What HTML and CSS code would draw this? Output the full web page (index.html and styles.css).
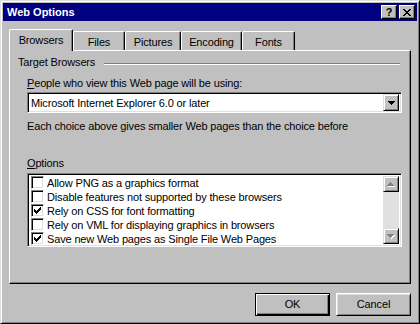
FILE: index.html
```html
<!DOCTYPE html>
<html>
<head>
<meta charset="utf-8">
<link rel="stylesheet" href="styles.css">
</head>
<body>
<div class="window">
  <div class="titlebar">
    <span class="title">Web Options</span>
    <div class="tbtns">
      <span class="tbtn help">?</span>
      <span class="tbtn close"><svg width="8" height="7" viewBox="0 0 8 7" shape-rendering="crispEdges"><path d="M0 0h2v1h1v1h2v-1h1v-1h2v1h-1v1h-1v1h-1v1h1v1h1v1h1v1h-2v-1h-1v-1h-2v1h-1v1h-2v-1h1v-1h1v-1h1v-1h-1v-1h-1v-1h-1z"/></svg></span>
    </div>
  </div>
  <div class="content">
    <div class="tabs">
      <div class="tab active w-browsers">Browsers</div>
      <div class="tab w-files">Files</div>
      <div class="tab w-pictures">Pictures</div>
      <div class="tab w-encoding">Encoding</div>
      <div class="tab w-fonts">Fonts</div>
    </div>
    <div class="panel">
      <div class="group-head">
        <span class="group-label">Target Browsers</span>
        <span class="etch"></span>
      </div>
      <div class="group-body">
        <div class="label people"><u>P</u>eople who view this Web page will be using:</div>
        <div class="combo">
          <span class="combo-text">Microsoft Internet Explorer 6.0 or later</span>
          <span class="combo-btn"><svg width="7" height="4" viewBox="0 0 7 4" shape-rendering="crispEdges"><path d="M0 0h7v1h-1v1h-1v1h-1v1h-1v-1h-1v-1h-1v-1h-1z"/></svg></span>
        </div>
        <div class="label hint">Each choice above gives smaller Web pages than the choice before</div>
        <div class="label options"><u>O</u>ptions</div>
        <div class="listbox">
          <div class="rows">
            <div class="row"><span class="cb"></span><span>Allow PNG as a graphics format</span></div>
            <div class="row"><span class="cb"></span><span>Disable features not supported by these browsers</span></div>
            <div class="row"><span class="cb"><svg width="7" height="7" viewBox="0 0 7 7" shape-rendering="crispEdges"><path d="M6 0h1v3h-1zM5 1h1v3h-1zM4 2h1v3h-1zM3 3h1v3h-1zM2 4h1v3h-1zM1 3h1v3h-1zM0 2h1v3h-1z"/></svg></span><span>Rely on CSS for font formatting</span></div>
            <div class="row"><span class="cb"></span><span>Rely on VML for displaying graphics in browsers</span></div>
            <div class="row"><span class="cb"><svg width="7" height="7" viewBox="0 0 7 7" shape-rendering="crispEdges"><path d="M6 0h1v3h-1zM5 1h1v3h-1zM4 2h1v3h-1zM3 3h1v3h-1zM2 4h1v3h-1zM1 3h1v3h-1zM0 2h1v3h-1z"/></svg></span><span>Save new Web pages as Single File Web Pages</span></div>
          </div>
          <div class="scrollbar">
            <span class="sbtn"><svg width="8" height="5" viewBox="0 0 8 5" shape-rendering="crispEdges"><path fill="#fff" d="M1 4h7v1h-7zM2 3h5v1h-5zM3 2h3v1h-3zM4 1h1v1h-1z"/><path fill="#808080" d="M0 3h7v1h-7zM1 2h5v1h-5zM2 1h3v1h-3zM3 0h1v1h-1z"/></svg></span>
            <span class="track"></span>
            <span class="sbtn"><svg width="8" height="5" viewBox="0 0 8 5" shape-rendering="crispEdges"><path fill="#fff" d="M1 1h7v1h-7zM2 2h5v1h-5zM3 3h3v1h-3zM4 4h1v1h-1z"/><path fill="#808080" d="M0 0h7v1h-7zM1 1h5v1h-5zM2 2h3v1h-3zM3 3h1v1h-1z"/></svg></span>
          </div>
        </div>
      </div>
    </div>
    <div class="buttons">
      <div class="btn default"><span class="btn-in">OK</span></div>
      <div class="btn"><span class="btn-in">Cancel</span></div>
    </div>
  </div>
</div>
</body>
</html>
```
FILE: styles.css
```css
html, body {
  margin: 0;
  padding: 0;
  background: #c0c0c0;
}
body {
  font-family: "Liberation Sans", Arial, sans-serif;
  font-size: 11px;
  letter-spacing: -0.15px;
  color: #000;
}
.window {
  width: 420px;
  height: 324px;
  box-sizing: border-box;
  background: #c0c0c0;
  border: 1px solid;
  border-color: #dfdfdf #000 #000 #dfdfdf;
  box-shadow: inset 1px 1px #fff, inset -1px -1px #808080;
  padding: 2px;
}
.titlebar {
  height: 18px;
  background: #000080;
  display: flex;
  align-items: center;
  justify-content: space-between;
  color: #fff;
}
.title {
  font-weight: bold;
  padding-left: 4px;
  font-size: 11px;
  letter-spacing: 0;
}
.tbtns {
  display: flex;
  gap: 2px;
  margin-right: 2px;
}
.tbtn {
  width: 16px;
  height: 14px;
  box-sizing: border-box;
  background: #c0c0c0;
  border: 1px solid;
  border-color: #fff #000 #000 #fff;
  box-shadow: inset -1px -1px #808080;
  display: flex;
  align-items: center;
  justify-content: center;
  color: #000;
  font-weight: bold;
  font-size: 11px;
  line-height: 12px;
  letter-spacing: 0;
}
.tbtn.help {
  padding-bottom: 1px;
}
.content {
  padding: 8px 6px 0 6px;
}
.tabs {
  display: flex;
  align-items: flex-end;
  height: 21px;
}
.tab {
  height: 19px;
  box-sizing: border-box;
  border: 1px solid;
  border-bottom: none;
  border-color: #fff #000 #000 #fff;
  border-radius: 2px 2px 0 0;
  box-shadow: inset -1px 0 #808080;
  display: flex;
  align-items: center;
  justify-content: center;
  padding-top: 1px;
}
.tab.active {
  height: 22px;
  margin-bottom: -1px;
  background: #c0c0c0;
  position: relative;
  z-index: 1;
  padding-top: 0;
  padding-bottom: 1px;
}
.w-browsers { width: 64px; }
.w-files { width: 52px; }
.w-pictures { width: 56px; }
.w-encoding { width: 61px; }
.w-fonts { width: 53px; }
.panel {
  height: 234px;
  box-sizing: border-box;
  border: 1px solid;
  border-color: #fff #000 #000 #fff;
  box-shadow: inset -1px -1px #808080;
  padding: 5px 10px 0 8px;
}
.group-head {
  display: flex;
  align-items: center;
  height: 13px;
}
.group-label {
  line-height: 13px;
}
.etch {
  flex: 1;
  height: 0;
  border-top: 1px solid #808080;
  border-bottom: 1px solid #fff;
  margin-left: 9px;
  margin-top: 2px;
}
.group-body {
  padding-left: 9px;
}
.label {
  line-height: 13px;
  white-space: nowrap;
}
.people {
  margin-top: 8px;
}
.combo {
  margin-top: 2px;
  width: 375px;
  height: 21px;
  box-sizing: border-box;
  background: #fff;
  border: 1px solid;
  border-color: #808080 #fff #fff #808080;
  box-shadow: inset 1px 1px #000, inset -1px -1px #dfdfdf;
  padding: 2px;
  display: flex;
  align-items: center;
}
.combo-text {
  flex: 1;
  padding-left: 1px;
}
.combo-btn, .sbtn {
  width: 16px;
  box-sizing: border-box;
  background: #c0c0c0;
  border: 1px solid;
  border-color: #dfdfdf #000 #000 #dfdfdf;
  box-shadow: inset 1px 1px #fff, inset -1px -1px #808080;
  display: flex;
  align-items: center;
  justify-content: center;
}
.combo-btn {
  height: 17px;
}
.combo-btn svg {
  margin-left: 1px;
}
.hint {
  margin-top: 7px;
}
.options {
  margin-top: 24px;
}
.listbox {
  margin-top: 3px;
  width: 375px;
  height: 74px;
  box-sizing: border-box;
  background: #fff;
  border: 1px solid;
  border-color: #808080 #fff #fff #808080;
  box-shadow: inset 1px 1px #000, inset -1px -1px #dfdfdf;
  padding: 2px;
  display: flex;
}
.rows {
  flex: 1;
}
.row {
  height: 14px;
  display: flex;
  align-items: flex-start;
  white-space: nowrap;
  line-height: 14px;
}
.cb {
  width: 13px;
  height: 13px;
  box-sizing: border-box;
  margin-left: 1px;
  margin-right: 3px;
  background: #fff;
  border: 1px solid;
  border-color: #808080 #fff #fff #808080;
  box-shadow: inset 1px 1px #000, inset -1px -1px #dfdfdf;
  display: flex;
  align-items: center;
  justify-content: center;
  flex: none;
}
.scrollbar {
  width: 16px;
  display: flex;
  flex-direction: column;
  background: #e0e0e0;
}
.sbtn {
  height: 16px;
}
.track {
  flex: 1;
}
.buttons {
  display: flex;
  justify-content: flex-end;
  gap: 6px;
  margin-top: 9px;
}
.btn {
  width: 75px;
  height: 23px;
  box-sizing: border-box;
  background: #c0c0c0;
  border: 1px solid;
  border-color: #fff #000 #000 #fff;
  box-shadow: inset 1px 1px #dfdfdf, inset -1px -1px #808080;
  display: flex;
  align-items: center;
  justify-content: center;
}
.btn.default {
  border: 1px solid #000;
  box-shadow: inset 1px 1px #fff, inset -1px -1px #000, inset -2px -2px #808080;
}
.btn-in {
  line-height: 13px;
}
```
